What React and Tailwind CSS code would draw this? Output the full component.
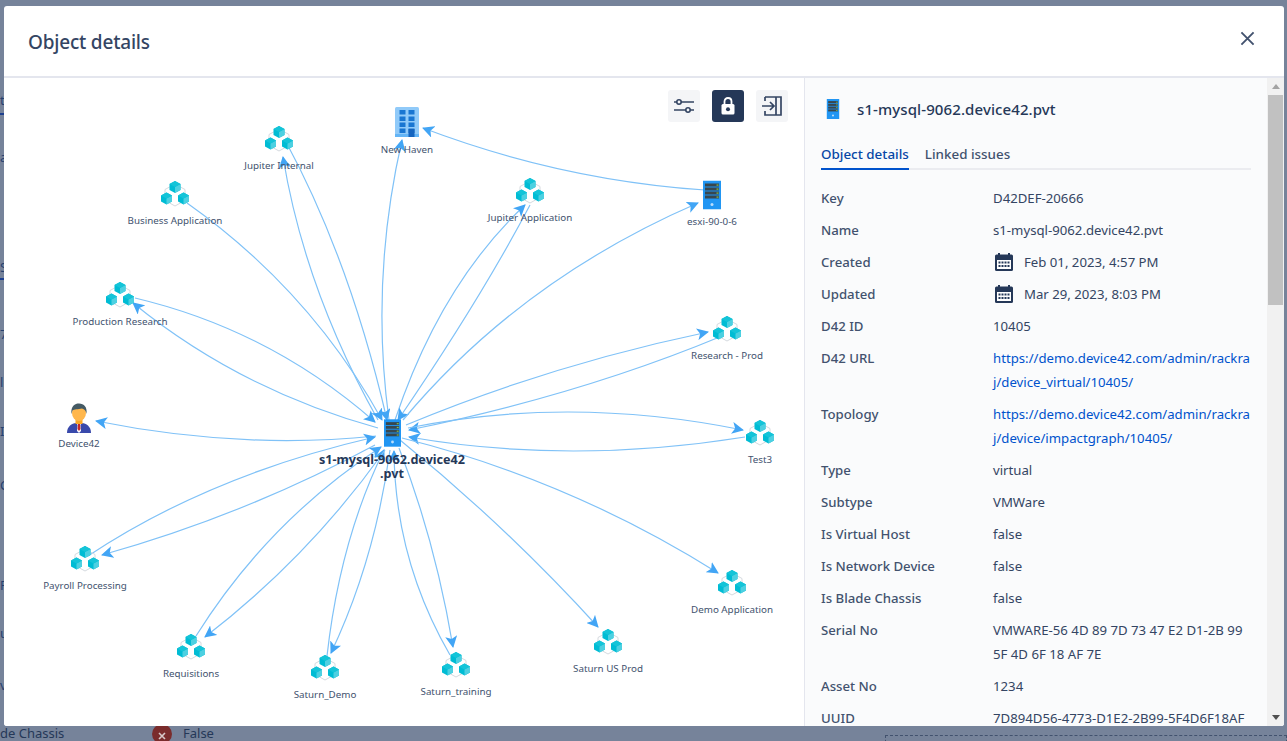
import React from "react";

const font = "font-['Noto_Sans','Open_Sans',sans-serif]";

const nodes = [
  { label: "Jupiter Internal", icon: "cube", x: 279, y: 139, ty: 166 },
  { label: "Business Application", icon: "cube", x: 175, y: 194, ty: 221 },
  { label: "New Haven", icon: "building", x: 407, y: 122, ty: 150 },
  { label: "Jupiter Application", icon: "cube", x: 530, y: 191, ty: 218 },
  { label: "esxi-90-0-6", icon: "server", x: 712, y: 195, ty: 222 },
  { label: "Production Research", icon: "cube", x: 120, y: 295, ty: 322 },
  { label: "Research - Prod", icon: "cube", x: 727, y: 329, ty: 356 },
  { label: "Device42", icon: "person", x: 79, y: 418, ty: 444 },
  { label: "Test3", icon: "cube", x: 760, y: 433, ty: 460 },
  { label: "Payroll Processing", icon: "cube", x: 85, y: 559, ty: 586 },
  { label: "Demo Application", icon: "cube", x: 732, y: 583, ty: 610 },
  { label: "Requisitions", icon: "cube", x: 191, y: 647, ty: 674 },
  { label: "Saturn_Demo", icon: "cube", x: 325, y: 668, ty: 695 },
  { label: "Saturn_training", icon: "cube", x: 456, y: 665, ty: 692 },
  { label: "Saturn US Prod", icon: "cube", x: 608, y: 642, ty: 669 },
];

const edges = [
  "M389 420 Q370 280 402 140",
  "M705 190 Q560 180 423 128",
  "M378 420 Q305 290 283 157",
  "M285 140 Q350 260 387 420",
  "M187 203 Q310 290 382 420",
  "M395 420 Q440 285 525 205",
  "M530 205 Q480 300 398 420",
  "M403 420 Q520 280 698 203",
  "M378 428 Q240 390 133 303",
  "M135 298 Q270 330 375 422",
  "M376 436 Q240 450 96 421",
  "M406 425 Q550 365 708 332",
  "M722 336 Q580 395 409 430",
  "M408 428 Q570 395 743 430",
  "M745 437 Q570 465 409 437",
  "M402 438 Q570 480 718 573",
  "M400 440 Q505 525 598 627",
  "M399 448 Q435 540 453 647",
  "M450 655 Q395 560 394 451",
  "M390 450 Q375 560 331 653",
  "M327 656 Q340 540 384 450",
  "M385 450 Q309 557 205 637",
  "M196 636 Q268 521 381 447",
  "M375 445 Q245 515 102 555",
  "M88 556 Q210 475 375 437",
];

const rows = [
  ["Key", "D42DEF-20666"],
  ["Name", "s1-mysql-9062.device42.pvt"],
  ["Created", "Feb 01, 2023, 4:57 PM", "date"],
  ["Updated", "Mar 29, 2023, 8:03 PM", "date"],
  ["D42 ID", "10405"],
  ["D42 URL", "https://demo.device42.com/admin/rackraj/device_virtual/10405/", "link"],
  ["Topology", "https://demo.device42.com/admin/rackraj/device/impactgraph/10405/", "link"],
  ["Type", "virtual"],
  ["Subtype", "VMWare"],
  ["Is Virtual Host", "false"],
  ["Is Network Device", "false"],
  ["Is Blade Chassis", "false"],
  ["Serial No", "VMWARE-56 4D 89 7D 73 47 E2 D1-2B 99 5F 4D 6F 18 AF 7E"],
  ["Asset No", "1234"],
  ["UUID", "7D894D56-4773-D1E2-2B99-5F4D6F18AF"],
];

// bits of the page that peek out left of the modal
const behind = [
  { text: "t", top: "top-[90px]" },
  { text: "a", top: "top-[147px]" },
  { text: "S", top: "top-[257px]" },
  { text: "7", top: "top-[324px]" },
  { text: "l", top: "top-[372px]" },
  { text: "I", top: "top-[421px]" },
  { text: "C", top: "top-[475px]" },
  { text: "F", top: "top-[575px]" },
  { text: "u", top: "top-[623px]" },
  { text: "v", top: "top-[675px]" },
];

function Cube({ x, y }) {
  return (
    <g transform={`translate(${x} ${y})`}>
      <path d="M0 -6 L5.5 -3 V3 L0 6 L-5.5 3 V-3 Z" fill="#00bcd4" />
      <path d="M0 0 L5.5 -3 V3 L0 6 Z" fill="#4dd0e1" />
      <path d="M0 -6 L5.5 -3 L0 0 L-5.5 -3 Z" fill="#14c4d8" />
    </g>
  );
}

function CubeIcon() {
  return (
    <svg width="30" height="28" viewBox="0 0 30 28">
      <path d="M15 4 L25 9.5 V20.5 L15 26 L5 20.5 V9.5 Z" fill="none" stroke="#d5dadf" strokeWidth="1" />
      <Cube x={15} y={7} />
      <Cube x={6.5} y={18.5} />
      <Cube x={23.5} y={18.5} />
    </svg>
  );
}

function ServerIcon({ w = 18, h = 29 }) {
  return (
    <svg width={w} height={h} viewBox="0 0 18 29">
      <rect width="18" height="29" fill="#2196f3" />
      {[3, 7, 11, 15].map((y) => (
        <g key={y}>
          <rect x="2" y={y} width="14" height="3" fill="#37474f" />
          <rect x="13.5" y={y + 1} width="2" height="1.2" fill="#8bc34a" />
        </g>
      ))}
      <circle cx="9" cy="24" r="1.5" fill="#bbdefb" />
    </svg>
  );
}

function BuildingIcon() {
  return (
    <svg width="24" height="30" viewBox="0 0 24 30">
      <rect width="24" height="30" rx="1.5" fill="#90caf9" />
      <rect y="27" width="24" height="3" fill="#64b5f6" />
      {[3, 9.5, 15.5, 21.5].map((y) => (
        <g key={y}>
          <rect x="4.5" y={y} width="6" height="4.5" fill="#1976d2" />
          <rect x="13.5" y={y} width="6" height="4.5" fill="#1976d2" />
        </g>
      ))}
      <rect x="13.5" y="22" width="6" height="8" fill="#1565c0" />
    </svg>
  );
}

function PersonIcon() {
  return (
    <svg width="26" height="30" viewBox="0 0 26 30">
      <path d="M1 30 C1 23 6 20.5 10 20 H16 C20 20.5 25 23 25 30 Z" fill="#3949ab" />
      <path d="M10 19 H16 L14.5 22 L15 28 L13 30 L11 28 L11.5 22 Z" fill="#fff" />
      <path d="M12 21 H14 L14.5 26 L13 28 L11.5 26 Z" fill="#c62828" />
      <rect x="9.5" y="15" width="7" height="6" fill="#f9a825" />
      <ellipse cx="13" cy="10" rx="7" ry="8" fill="#ffb74d" />
      <path d="M5.5 11 C4.5 3 9 0.5 13 0.5 C18 0.5 21.5 4 20.5 11 C20 8 18.5 6 16 5.5 C12 6.5 8 6 6.5 7.5 C6 8.5 6 10 5.5 11 Z" fill="#455a64" />
    </svg>
  );
}

function CalendarIcon() {
  return (
    <svg width="18" height="18" viewBox="0 0 18 18" className="shrink-0 ml-[2px]">
      <rect x="3" y="0" width="2" height="3" fill="#253858" />
      <rect x="13" y="0" width="2" height="3" fill="#253858" />
      <rect y="1.5" width="18" height="16.5" rx="1.5" fill="#253858" />
      <rect x="2" y="7" width="14" height="9" fill="#fff" />
      {[8.5, 12].map((y) =>
        [3.5, 6.5, 9.5, 12.5].map((x) => <rect key={`${x}-${y}`} x={x} y={y} width="2" height="2" fill="#253858" />)
      )}
    </svg>
  );
}

function NodeIcon({ type }) {
  if (type === "cube") return <CubeIcon />;
  if (type === "server") return <ServerIcon w={18} h={29} />;
  if (type === "building") return <BuildingIcon />;
  return <PersonIcon />;
}

function Graph() {
  return (
    <div className="relative w-[800px] shrink-0 bg-white overflow-hidden">
      <svg className="absolute inset-0" width="800" height="648" viewBox="4 78 800 648" fill="none">
        <defs>
          <marker id="head" markerUnits="userSpaceOnUse" markerWidth="13" markerHeight="12" refX="11" refY="6" orient="auto">
            <path d="M0 0 L12 6 L0 12 L3 6 Z" fill="#42a5f5" />
          </marker>
        </defs>
        {edges.map((d) => (
          <path key={d} d={d} stroke="#80c2f7" strokeWidth="1.2" markerEnd="url(#head)" />
        ))}
      </svg>

      {nodes.map((n) => (
        <React.Fragment key={n.label}>
          <div
            className="absolute -translate-x-1/2 -translate-y-1/2 flex"
            style={{ left: n.x - 4, top: n.y - 78 }}
          >
            <NodeIcon type={n.icon} />
          </div>
          <div
            className="absolute -translate-x-1/2 -translate-y-1/2 whitespace-nowrap text-[9.8px] leading-[14px] text-[#42526e]"
            style={{ left: n.x - 4, top: n.ty - 78 }}
          >
            {n.label}
          </div>
        </React.Fragment>
      ))}

      {/* main node */}
      <div className="absolute left-[380px] top-[341px] flex">
        <ServerIcon w={17} h={28} />
      </div>
      <div className="absolute left-[308px] top-[375px] w-[160px] text-center font-bold text-[12.6px] leading-[14px] text-[#253858]">
        <div>s1-mysql-9062.device42</div>
        <div>.pvt</div>
      </div>

      {/* graph toolbar */}
      <div className="absolute top-[12px] right-[16px] flex gap-3">
        <button className="w-8 h-8 rounded-[3px] bg-[#f4f5f7] flex items-center justify-center">
          <svg width="20" height="16" viewBox="0 0 20 16" fill="none" stroke="#344563" strokeWidth="1.6">
            <path d="M0 4 H20 M0 12 H20" />
            <circle cx="5" cy="4" r="2.2" fill="#f4f5f7" />
            <circle cx="14" cy="12" r="2.2" fill="#f4f5f7" />
          </svg>
        </button>
        <button className="w-8 h-8 rounded-[3px] bg-[#253858] flex items-center justify-center">
          <svg width="14" height="18" viewBox="0 0 14 18" fill="none">
            <path d="M3.5 8 V4.5 C3.5 2.5 5 1 7 1 C9 1 10.5 2.5 10.5 4.5 V8" stroke="#fff" strokeWidth="1.8" />
            <rect x="0.5" y="7" width="13" height="10.5" rx="1.5" fill="#fff" />
            <circle cx="7" cy="12.2" r="2" fill="#253858" />
          </svg>
        </button>
        <button className="w-8 h-8 rounded-[3px] bg-[#f4f5f7] flex items-center justify-center">
          <svg width="20" height="20" viewBox="0 0 20 20" fill="none" stroke="#344563" strokeWidth="1.7">
            <path d="M3 1 H19 V19 H3 V15 M3 1 V5 M14 1 V19" />
            <path d="M0 10 H12 M8 6 L12 10 L8 14" />
          </svg>
        </button>
      </div>
    </div>
  );
}

function Value({ value, kind }) {
  if (kind === "date") {
    return (
      <div className="flex items-center gap-[11px]">
        <CalendarIcon />
        <span>{value}</span>
      </div>
    );
  }
  if (kind === "link") return <span className="text-[#0052cc] break-all">{value}</span>;
  return <span>{value}</span>;
}

function Details() {
  return (
    <div className="flex-1 min-w-0 flex border-l border-[#e4e6ee] bg-[#fafbfc]">
      <div className="flex-1 min-w-0 overflow-hidden pl-4 pr-[16px]">
        <div className="flex items-center gap-[17px] h-[62px] pl-[5px]">
          <ServerIcon w={14} h={20} />
          <span className="text-[15px] tracking-[0.1px] text-[#253858] font-medium">s1-mysql-9062.device42.pvt</span>
        </div>
        <div className="flex border-b-2 border-[#ebecf0] h-[30px] text-[13.4px] font-medium text-[#42526e]">
          <div className="h-[30px] text-[#0747a6] border-b-2 border-[#0052cc] leading-[28px]">Object details</div>
          <div className="ml-4 leading-[28px]">Linked issues</div>
        </div>
        <div className="mt-4 flex flex-col gap-2 text-[13.2px] leading-6 text-[#344563]">
          {rows.map(([label, value, kind]) => (
            <div key={label} className="flex">
              <div className="w-[172px] shrink-0 font-medium text-[#42526e]">{label}</div>
              <div className="w-[259px] shrink-0">
                <Value value={value} kind={kind} />
              </div>
            </div>
          ))}
        </div>
      </div>
      {/* scrollbar */}
      <div className="w-[17px] shrink-0 flex flex-col bg-[#f1f1f1]">
        <div className="h-[17px] flex items-center justify-center">
          <div className="w-0 h-0 border-x-[4px] border-x-transparent border-b-[5px] border-b-[#a3a3a3]" />
        </div>
        <div className="mx-[1px] h-[210px] bg-[#c1c1c1]" />
        <div className="mt-auto h-[17px] flex items-center justify-center">
          <div className="w-0 h-0 border-x-[4px] border-x-transparent border-t-[5px] border-t-[#505050]" />
        </div>
      </div>
    </div>
  );
}

export default function App() {
  return (
    <div className={`relative w-[1287px] h-[741px] overflow-hidden bg-[#76839a] pl-[4px] pt-[6px] ${font}`}>
      {/* page behind the overlay */}
      {behind.map((b) => (
        <span key={b.text} className={`absolute left-0 text-[13px] leading-5 text-[#26406f] ${b.top}`}>
          {b.text}
        </span>
      ))}
      <div className="absolute left-0 top-[113px] w-1 h-[2px] bg-[#1d3f8f]" />
      <div className="absolute left-0 top-[278px] w-1 h-[2px] bg-[#1d3f8f]" />
      <span className="absolute left-0 top-[723px] text-[13px] leading-5 text-[#253858] whitespace-nowrap">de Chassis</span>
      <div className="absolute left-[152px] top-[724px] w-5 h-5 rounded-full bg-[#7a2c2c] flex items-center justify-center">
        <svg width="8" height="8" viewBox="0 0 8 8" stroke="#d8c8c8" strokeWidth="1.6" className="mt-[4px]">
          <path d="M1 1 L7 7 M7 1 L1 7" />
        </svg>
      </div>
      <span className="absolute left-[183px] top-[723px] text-[13px] leading-5 text-[#253858]">False</span>
      <div className="absolute left-[885px] top-[735px] w-[402px] h-8 border border-dashed border-[#42526e]" />

      <div className="relative w-[1280px] h-[720px] rounded-[3px] bg-white flex flex-col overflow-hidden">
        <div className="h-[72px] shrink-0 flex items-center justify-between pl-6 pr-[29px] border-b-2 border-[#e4e6ee]">
          <h1 className="pt-[2px] text-[19px] tracking-[-0.2px] font-medium text-[#344563]">Object details</h1>
          <svg width="15" height="15" viewBox="0 0 16 16" fill="none" stroke="#42526e" strokeWidth="2" className="mb-[5px]">
            <path d="M1.5 1.5 L14.5 14.5 M14.5 1.5 L1.5 14.5" />
          </svg>
        </div>
        <div className="flex-1 min-h-0 flex">
          <Graph />
          <Details />
        </div>
      </div>
    </div>
  );
}
